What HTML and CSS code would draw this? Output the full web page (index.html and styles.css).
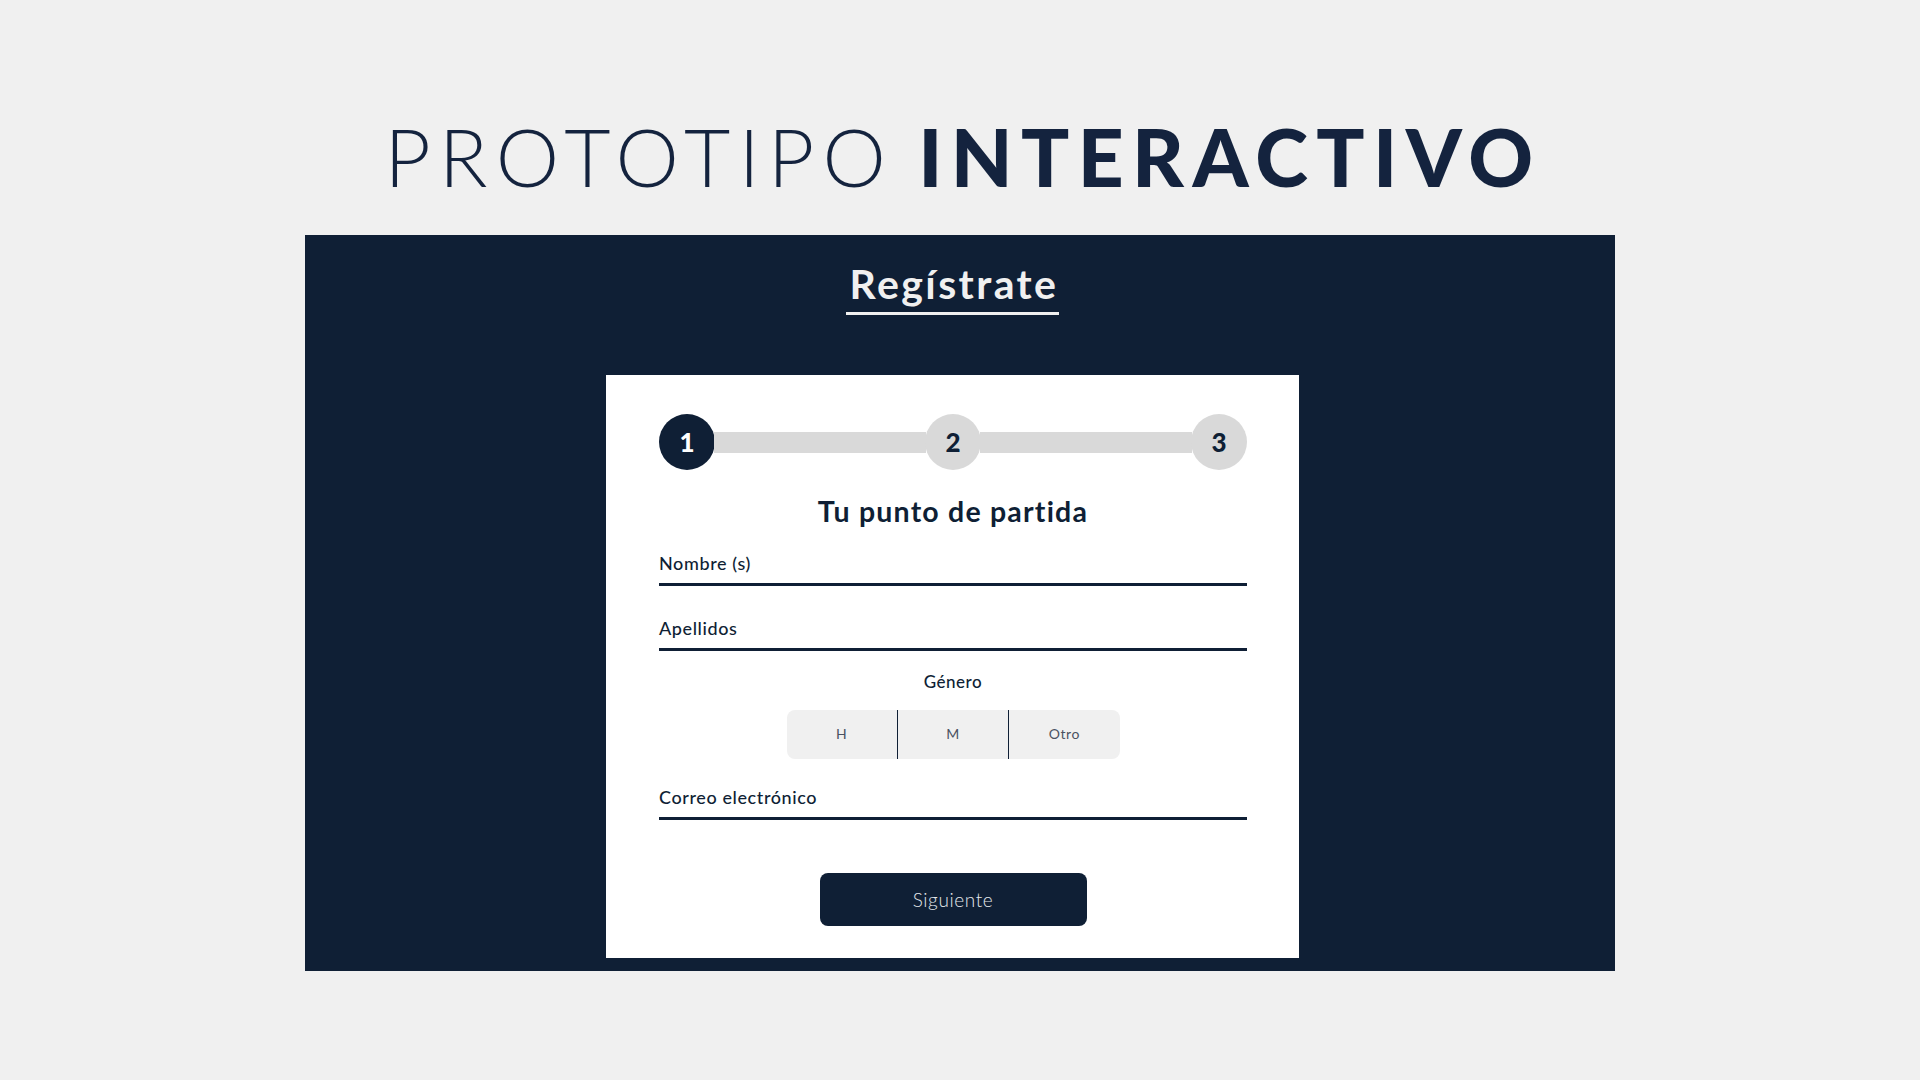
FILE: index.html
```html
<!DOCTYPE html>
<html lang="es">
<head>
<meta charset="utf-8">
<title>Prototipo interactivo</title>
<link rel="stylesheet" href="styles.css">
</head>
<body>
<main class="page">
  <h1 class="title"><span class="title-light">PROTOTIPO</span> <span class="title-bold">INTERACTIVO</span></h1>
  <section class="panel">
    <h2 class="panel-heading">Regístrate</h2>
    <div class="card">
      <div class="stepper">
        <div class="step step-active">1</div>
        <div class="step-bar"></div>
        <div class="step">2</div>
        <div class="step-bar"></div>
        <div class="step">3</div>
      </div>
      <h3 class="card-title">Tu punto de partida</h3>
      <div class="field field-first">Nombre (s)</div>
      <div class="field field-second">Apellidos</div>
      <div class="gender-label">Género</div>
      <div class="segmented">
        <div class="segment">H</div>
        <div class="segment">M</div>
        <div class="segment">Otro</div>
      </div>
      <div class="field field-email">Correo electrónico</div>
      <div class="button">Siguiente</div>
    </div>
  </section>
</main>
</body>
</html>
```
FILE: styles.css
```css
html, body {
  margin: 0;
  padding: 0;
}
body {
  background: #f0f0f0;
  font-family: "Lato", "Liberation Sans", sans-serif;
  color: #0f1f35;
}
.page {
  display: flex;
  flex-direction: column;
  align-items: center;
  padding-top: 108px;
  height: 972px;
}
.title {
  margin: 0 0 31px 0;
  padding-left: 6px;
  font-size: 80px;
  line-height: 96px;
  height: 96px;
  color: #14233e;
  white-space: nowrap;
  letter-spacing: 8.4px;
  word-spacing: -4px;
}
.title-light {
  font-weight: 300;
}
.title-bold {
  font-weight: 900;
}
.panel {
  width: 1310px;
  height: 736px;
  background: #0f1f35;
  display: flex;
  flex-direction: column;
  align-items: center;
  box-sizing: border-box;
  padding: 25px 15px 0 0;
}
.panel-heading {
  margin: 0;
  font-size: 41px;
  line-height: 48px;
  font-weight: 700;
  letter-spacing: 2.4px;
  color: #f0f0f0;
  padding: 0 1px 4px 4px;
  border-bottom: 3px solid #f0f0f0;
}
.card {
  margin-top: 60px;
  width: 693px;
  height: 583px;
  box-sizing: border-box;
  background: #ffffff;
  padding: 39px 52px 32px 53px;
  display: flex;
  flex-direction: column;
}
.stepper {
  display: flex;
  align-items: center;
  height: 56px;
}
.step {
  width: 56px;
  height: 56px;
  border-radius: 50%;
  background: #d9d9d9;
  color: #0f1f35;
  font-size: 26px;
  font-weight: 900;
  display: flex;
  align-items: center;
  justify-content: center;
  flex: none;
}
.step-active {
  background: #0f1f35;
  color: #ffffff;
}
.step-bar {
  flex: 1;
  height: 21px;
  background: #d9d9d9;
  margin: 0 -1px;
}
.card-title {
  margin: 24px 0 0 0;
  font-size: 28.5px;
  line-height: 34px;
  font-weight: 700;
  letter-spacing: 1.2px;
  text-align: center;
  color: #0f1f35;
}
.field {
  font-size: 18px;
  line-height: 22px;
  font-weight: 500;
  letter-spacing: 0.6px;
  color: #0f1f35;
  padding-bottom: 9px;
  border-bottom: 3px solid #0f1f35;
}
.field-first {
  margin-top: 24px;
}
.field-second {
  margin-top: 31px;
}
.gender-label {
  margin-top: 21px;
  font-size: 17px;
  line-height: 20px;
  font-weight: 500;
  letter-spacing: 0.5px;
  text-align: center;
}
.segmented {
  margin: 18px auto 0 auto;
  width: 333px;
  height: 50px;
  background: #f0f0f0;
  border-radius: 8px;
  display: flex;
}
.segment {
  flex: 1;
  display: flex;
  align-items: center;
  justify-content: center;
  padding-bottom: 2px;
  font-size: 14px;
  letter-spacing: 0.6px;
  color: #4a5262;
}
.segment + .segment {
  border-left: 1px solid #0f1f35;
}
.field-email {
  margin-top: 27px;
}
.button {
  margin: 53px auto 0 auto;
  width: 267px;
  height: 54px;
  border-radius: 8px;
  background: #0f1f35;
  color: #e4e7eb;
  font-size: 19px;
  font-weight: 300;
  letter-spacing: 0.6px;
  display: flex;
  align-items: center;
  justify-content: center;
  padding-bottom: 1px;
  box-sizing: border-box;
}
```
